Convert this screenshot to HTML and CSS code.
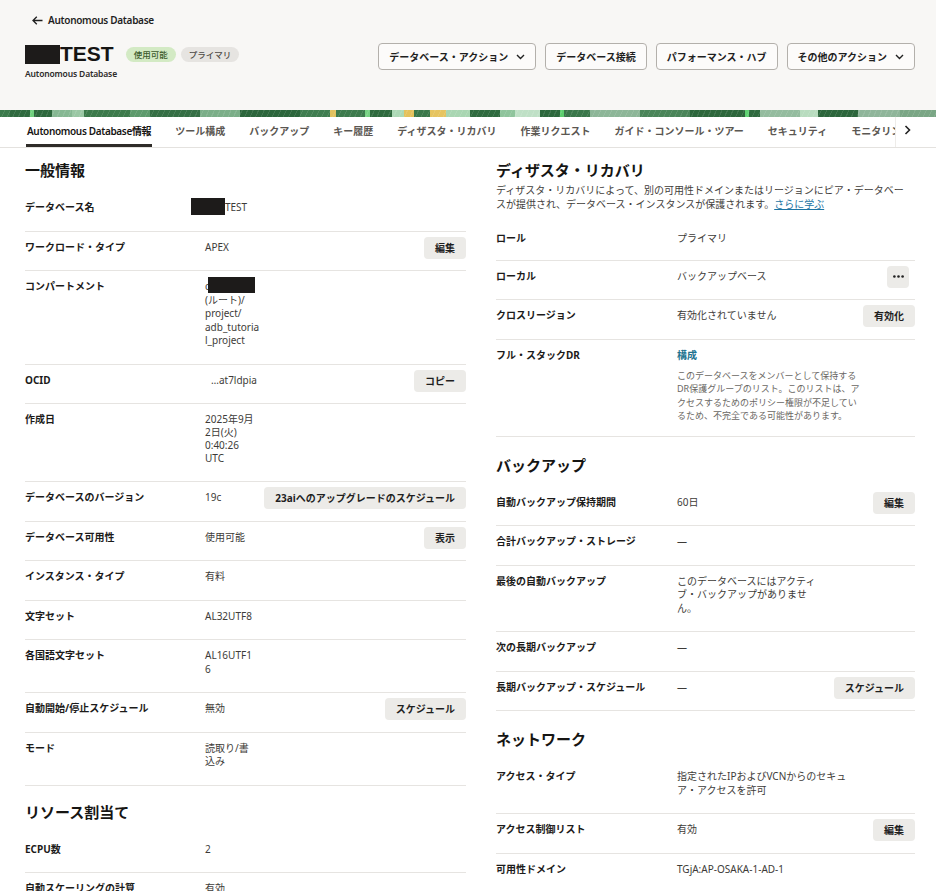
FILE: index.html
```html
<!DOCTYPE html>
<html lang="ja">
<head>
<meta charset="utf-8">
<title>Autonomous Database</title>
<link rel="stylesheet" href="styles.css">
</head>
<body>
<header class="hdr">
  <a class="back" href="#">
    <svg class="back-ic" width="11" height="9" viewBox="0 0 11 9"><path d="M10.5 4.5H1M4.8 0.8L1 4.5l3.8 3.7" fill="none" stroke="#1f1f1f" stroke-width="1.3"/></svg>
    Autonomous Database
  </a>
  <div class="titlebar">
    <div class="titleblock">
      <div class="titleline">
        <h1 class="title"><span class="redact redact-title"></span>TEST</h1>
        <span class="badge badge-ok">使用可能</span>
        <span class="badge badge-gray">プライマリ</span>
      </div>
      <div class="subtitle">Autonomous Database</div>
    </div>
    <div class="actions">
      <button class="hbtn">データベース・アクション<svg class="chev" width="9" height="6" viewBox="0 0 9 6"><path d="M1 1l3.5 3.5L8 1" fill="none" stroke="#222" stroke-width="1.4"/></svg></button>
      <button class="hbtn">データベース接続</button>
      <button class="hbtn">パフォーマンス・ハブ</button>
      <button class="hbtn">その他のアクション<svg class="chev" width="9" height="6" viewBox="0 0 9 6"><path d="M1 1l3.5 3.5L8 1" fill="none" stroke="#222" stroke-width="1.4"/></svg></button>
    </div>
  </div>
</header>
<div class="banner"></div>
<nav class="tabbar">
  <div class="tabs">
    <a class="tab active">Autonomous Database情報</a>
    <a class="tab">ツール構成</a>
    <a class="tab">バックアップ</a>
    <a class="tab">キー履歴</a>
    <a class="tab">ディザスタ・リカバリ</a>
    <a class="tab">作業リクエスト</a>
    <a class="tab">ガイド・コンソール・ツアー</a>
    <a class="tab">セキュリティ</a>
    <a class="tab">モニタリング</a>
  </div>
  <div class="tab-next"><svg width="7" height="10" viewBox="0 0 7 10"><path d="M1.5 1l4 4-4 4" fill="none" stroke="#222" stroke-width="1.6"/></svg></div>
</nav>

<main class="content">
  <div class="col col-left">
    <section class="sec">
      <h2>一般情報</h2>
      <div class="row"><div class="lbl">データベース名</div><div class="val"><span class="redact redact-name"></span>TEST</div></div>
      <div class="row"><div class="lbl">ワークロード・タイプ</div><div class="val">APEX</div><button class="btn">編集</button></div>
      <div class="row"><div class="lbl">コンパートメント</div><div class="val">c<span class="redact redact-comp"></span><br>(ルート)/<br>project/<br>adb_tutoria<br>l_project</div></div>
      <div class="row"><div class="lbl">OCID</div><div class="val val-ocid">…at7ldpia</div><button class="btn">コピー</button></div>
      <div class="row"><div class="lbl">作成日</div><div class="val val-date">2025年9月<br>2日(火)<br>0:40:26<br>UTC</div></div>
      <div class="row"><div class="lbl">データベースのバージョン</div><div class="val">19c</div><button class="btn">23aiへのアップグレードのスケジュール</button></div>
      <div class="row"><div class="lbl">データベース可用性</div><div class="val">使用可能</div><button class="btn">表示</button></div>
      <div class="row"><div class="lbl">インスタンス・タイプ</div><div class="val">有料</div></div>
      <div class="row"><div class="lbl">文字セット</div><div class="val">AL32UTF8</div></div>
      <div class="row"><div class="lbl">各国語文字セット</div><div class="val">AL16UTF1<br>6</div></div>
      <div class="row"><div class="lbl">自動開始/停止スケジュール</div><div class="val">無効</div><button class="btn">スケジュール</button></div>
      <div class="row"><div class="lbl">モード</div><div class="val">読取り/書<br>込み</div></div>
    </section>
    <section class="sec sec-res">
      <h2>リソース割当て</h2>
      <div class="row"><div class="lbl">ECPU数</div><div class="val">2</div></div>
      <div class="row"><div class="lbl">自動スケーリングの計算</div><div class="val">有効</div></div>
      <div class="row"><div class="lbl">ストレージ</div><div class="val">20 GB</div></div>
    </section>
  </div>

  <div class="col col-right">
    <section class="sec">
      <h2 class="h-desc">ディザスタ・リカバリ</h2>
      <p class="desc">ディザスタ・リカバリによって、別の可用性ドメインまたはリージョンにピア・データベー<br>スが提供され、データベース・インスタンスが保護されます。<a class="link" href="#">さらに学ぶ</a></p>
      <div class="row row-role"><div class="lbl">ロール</div><div class="val">プライマリ</div></div>
      <div class="row"><div class="lbl">ローカル</div><div class="val">バックアップベース</div><button class="btn btn-icon"><svg width="11" height="3" viewBox="0 0 11 3"><circle cx="1.4" cy="1.5" r="1.3" fill="#222"/><circle cx="5.5" cy="1.5" r="1.3" fill="#222"/><circle cx="9.6" cy="1.5" r="1.3" fill="#222"/></svg></button></div>
      <div class="row"><div class="lbl">クロスリージョン</div><div class="val">有効化されていません</div><button class="btn">有効化</button></div>
      <div class="row row-dr"><div class="lbl">フル・スタックDR</div><div class="val"><a class="link link-strong" href="#">構成</a><p class="help">このデータベースをメンバーとして保持する<br>DR保護グループのリスト。このリストは、ア<br>クセスするためのポリシー権限が不足してい<br>るため、不完全である可能性があります。</p></div></div>
    </section>
    <section class="sec">
      <h2>バックアップ</h2>
      <div class="row"><div class="lbl">自動バックアップ保持期間</div><div class="val">60日</div><button class="btn">編集</button></div>
      <div class="row"><div class="lbl">合計バックアップ・ストレージ</div><div class="val">—</div></div>
      <div class="row"><div class="lbl">最後の自動バックアップ</div><div class="val">このデータベースにはアクティ<br>ブ・バックアップがありませ<br>ん。</div></div>
      <div class="row"><div class="lbl">次の長期バックアップ</div><div class="val">—</div></div>
      <div class="row"><div class="lbl">長期バックアップ・スケジュール</div><div class="val">—</div><button class="btn">スケジュール</button></div>
    </section>
    <section class="sec">
      <h2>ネットワーク</h2>
      <div class="row"><div class="lbl">アクセス・タイプ</div><div class="val">指定されたIPおよびVCNからのセキュ<br>ア・アクセスを許可</div></div>
      <div class="row"><div class="lbl">アクセス制御リスト</div><div class="val">有効</div><button class="btn">編集</button></div>
      <div class="row"><div class="lbl">可用性ドメイン</div><div class="val">TGjA:AP-OSAKA-1-AD-1</div></div>
    </section>
  </div>
</main>
</body>
</html>
```

FILE: styles.css
```css
* { box-sizing: border-box; }

html, body {
  margin: 0;
  padding: 0;
  background: #ffffff;
}

body {
  font-family: "Noto Sans", "Noto Sans CJK JP", sans-serif;
  color: #1f1f1f;
  overflow-x: hidden;
}

/* ---------- header ---------- */
.hdr {
  height: 110px;
  background: #f8f7f5;
  padding: 13px 21px 0 25px;
}

.back {
  display: flex;
  width: max-content;
  align-items: center;
  gap: 5px;
  margin-left: 7px;
  height: 14px;
  font-size: 10px;
  font-weight: 600;
  line-height: 14px;
  letter-spacing: -0.3px;
  color: #1f1f1f;
  text-decoration: none;
}

.back-ic { display: block; }

.titlebar {
  display: flex;
  justify-content: space-between;
  align-items: flex-start;
  margin-top: 16px;
}

.titleline {
  display: flex;
  align-items: center;
  height: 22px;
}

.title {
  margin: 0;
  font-family: "Liberation Sans", "Noto Sans", sans-serif;
  font-size: 21px;
  font-weight: 700;
  line-height: 22px;
  color: #161513;
  display: flex;
  align-items: center;
}

.redact {
  display: inline-block;
  background: #1d1b1a;
}

.redact-title {
  width: 35px;
  height: 19px;
}

.badge {
  display: inline-block;
  height: 15px;
  padding: 0 8px;
  border-radius: 8px;
  font-size: 8.5px;
  line-height: 15px;
  font-weight: 500;
  white-space: nowrap;
}

.badge-ok {
  margin-left: 12px;
  background: #d3eac4;
  color: #3d5a2c;
}

.badge-gray {
  margin-left: 5px;
  background: #e6e4e1;
  color: #4d4a46;
}

.subtitle {
  margin-top: 3px;
  font-size: 8.5px;
  font-weight: 600;
  line-height: 11px;
  letter-spacing: -0.15px;
  color: #2d2b29;
}

.actions {
  display: flex;
  gap: 9px;
}

.hbtn {
  display: inline-flex;
  align-items: center;
  gap: 8px;
  height: 27px;
  padding: 0 10px;
  background: #fcfbfa;
  border: 1px solid #b3b0ab;
  border-radius: 4px;
  font-family: inherit;
  font-size: 10px;
  font-weight: 700;
  color: #1f1f1f;
  white-space: nowrap;
}

.chev { display: block; }

/* ---------- decorative banner ---------- */
.banner {
  height: 7px;
  background:
    repeating-linear-gradient(115deg, rgba(255,255,255,0) 0 4px, rgba(255,255,255,0.10) 4px 5px),
    linear-gradient(90deg,
      #3b7a4b 0 10px, #2f6a3f 10px 30px, #6fd07e 30px 34px, #2d683d 34px 52px,
      #86b893 52px 72px, #9ac7a4 72px 84px, #3c7a4b 84px 130px, #5d9a6c 130px 150px,
      #356f45 150px 200px, #7bae88 200px 240px, #2c663c 240px 300px, #3f7d50 300px 330px,
      #e2c25e 330px 336px, #3d7b4d 336px 365px, #76d183 365px 370px, #2e6a3e 370px 392px,
      #acd9b6 392px 404px, #e4c15b 404px 414px, #3a784a 414px 430px, #e6c460 430px 446px,
      #a9d6b2 446px 470px, #2f6b3f 470px 500px, #8fc49c 500px 515px, #bfe0c6 515px 540px,
      #2d683d 540px 560px, #5ccf6e 560px 564px, #3a774a 564px 590px, #8db698 590px 640px,
      #4a8559 640px 690px, #2d673c 690px 745px, #5fd172 745px 749px, #2f6a3f 749px 760px,
      #94bc9f 760px 800px, #b8dcbf 800px 818px, #2c663c 818px 858px, #8fb59a 858px 900px,
      #7aa685 900px 936px);
}

/* ---------- tabs ---------- */
.tabbar {
  display: flex;
  height: 31px;
  background: #ffffff;
  border-bottom: 1px solid #e4e2df;
}

.tabs {
  flex: 1;
  display: flex;
  gap: 22px;
  padding-left: 26px;
  overflow: hidden;
  white-space: nowrap;
}

.tab {
  display: flex;
  align-items: center;
  height: 30px;
  padding: 0 1px 1px;
  border-bottom: 3px solid transparent;
  font-size: 10px;
  font-weight: 600;
  color: #5b5752;
  flex: none;
}

.tab.active {
  color: #161513;
  letter-spacing: -0.35px;
  border-bottom-color: #2f2c29;
}

.tab-next {
  width: 41px;
  flex: none;
  display: flex;
  align-items: center;
  padding-left: 8px;
  padding-bottom: 4px;
  border-left: 1px solid #eeece9;
}

/* ---------- content ---------- */
.content {
  display: grid;
  grid-template-columns: 441px 419px;
  column-gap: 30px;
  padding: 12px 21px 0 25px;
}

.sec + .sec {
  margin-top: 18px;
}

.sec-res {
  margin-top: 16px !important;
}

.sec h2 {
  margin: 0 0 12px;
  font-size: 15px;
  font-weight: 700;
  line-height: 20px;
  color: #161513;
}

.sec h2.h-desc {
  margin-bottom: 4px;
}

.desc {
  margin: 0 0 10px;
  font-size: 10px;
  line-height: 13.5px;
  white-space: nowrap;
  color: #3f3d3a;
}

.link {
  color: #1d74a3;
  text-decoration: underline;
}

.link-strong {
  font-weight: 700;
  text-decoration: none;
  color: #21738f;
}

.row {
  display: flex;
  align-items: flex-start;
  padding: 9px 0 16px;
  border-bottom: 1px solid #e6e4e1;
  font-size: 10px;
  line-height: 13.5px;
}

.row-role {
  padding-top: 11px;
  padding-bottom: 14px;
}

.lbl {
  width: 180px;
  flex: none;
  font-weight: 700;
  color: #1c1b1a;
}

.col-right .lbl {
  width: 181px;
}

.val {
  flex: 1;
  color: #3d3b38;
  white-space: nowrap;
}

.val-ocid {
  padding-left: 6px;
}

.val-date {
  line-height: 13px;
}

.redact-name {
  width: 34px;
  height: 17px;
  margin: -3px 0 -1px -14px;
  vertical-align: top;
}

.redact-comp {
  width: 47px;
  height: 16px;
  margin: -3px 0 0 -2px;
  vertical-align: top;
}

.btn {
  flex: none;
  height: 22px;
  margin: -4px 0 -5px;
  padding: 0 11px;
  border: 0;
  border-radius: 4px;
  background: #ecebe8;
  font-family: inherit;
  font-size: 10px;
  font-weight: 700;
  line-height: 22px;
  color: #1f1f1f;
  white-space: nowrap;
}

.btn-icon {
  width: 22px;
  padding: 0;
  margin-right: 6px;
  display: flex;
  align-items: center;
  justify-content: center;
}

.btn-icon svg { display: block; }

.row-dr {
  padding-bottom: 13px;
}

.help {
  margin: 7px 0 0;
  font-size: 9px;
  line-height: 13.4px;
  color: #6a6763;
}
```
